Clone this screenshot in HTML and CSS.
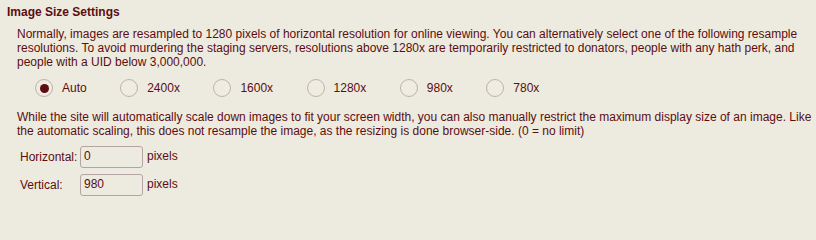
FILE: index.html
```html
<!DOCTYPE html>
<html lang="en">
<head>
<meta charset="utf-8">
<title>Image Size Settings</title>
<link rel="stylesheet" href="styles.css">
</head>
<body>
<div class="section">
  <h2 class="title">Image Size Settings</h2>
  <p class="desc">Normally, images are resampled to 1280 pixels of horizontal resolution for online viewing. You can alternatively select one of the following resample resolutions. To avoid murdering the staging servers, resolutions above 1280x are temporarily restricted to donators, people with any hath perk, and people with a UID below 3,000,000.</p>
  <div class="radios">
    <label class="opt"><span class="radio checked"></span><span class="opt-text">Auto</span></label>
    <label class="opt"><span class="radio"></span><span class="opt-text">2400x</span></label>
    <label class="opt"><span class="radio"></span><span class="opt-text">1600x</span></label>
    <label class="opt"><span class="radio"></span><span class="opt-text">1280x</span></label>
    <label class="opt"><span class="radio"></span><span class="opt-text">980x</span></label>
    <label class="opt"><span class="radio"></span><span class="opt-text">780x</span></label>
  </div>
  <p class="desc desc2">While the site will automatically scale down images to fit your screen width, you can also manually restrict the maximum display size of an image. Like the automatic scaling, this does not resample the image, as the resizing is done browser-side. (0 = no limit)</p>
  <div class="dims">
    <div class="dim-row">
      <span class="dim-label">Horizontal:</span>
      <input class="dim-input" type="text" value="0">
      <span class="unit">pixels</span>
    </div>
    <div class="dim-row">
      <span class="dim-label">Vertical:</span>
      <input class="dim-input" type="text" value="980">
      <span class="unit">pixels</span>
    </div>
  </div>
</div>
</body>
</html>
```
FILE: styles.css
```css
html, body {
  margin: 0;
  padding: 0;
  background: #EDEBDF;
}
body {
  font-family: "Liberation Sans", Arial, sans-serif;
  font-size: 12px;
  line-height: 14px;
  color: #5C0D11;
}
.section {
  padding: 5px 4px 0 7px;
}
.title {
  margin: 0;
  font-size: 12px;
  font-weight: bold;
  line-height: 14px;
}
.desc {
  margin: 8px 0 0 10px;
}
.radios {
  display: flex;
  align-items: center;
  gap: 33.5px;
  margin-top: 10px;
  padding-left: 28px;
  height: 18px;
}
.opt {
  display: flex;
  align-items: center;
  gap: 9px;
}
.radio {
  width: 18px;
  height: 18px;
  box-sizing: border-box;
  border: 1px solid #BDB2AD;
  border-radius: 50%;
  background: #EFECE0;
  display: flex;
  align-items: center;
  justify-content: center;
}
.radio.checked::after {
  content: "";
  width: 9px;
  height: 9px;
  border-radius: 50%;
  background: #5C0D11;
}
.desc2 {
  margin-top: 13px;
}
.dims {
  margin: 8px 0 0 13px;
  display: flex;
  flex-direction: column;
  gap: 6px;
}
.dim-row {
  display: flex;
  align-items: center;
  height: 22px;
}
.dim-label {
  width: 60px;
}
.dim-input {
  box-sizing: border-box;
  width: 63px;
  height: 22px;
  margin: 0;
  padding: 0 3px 2px;
  border: 1px solid #B5A4A4;
  border-radius: 3px;
  background: #EDEBDF;
  color: #5C0D11;
  font-family: "Liberation Sans", Arial, sans-serif;
  font-size: 12px;
  outline: none;
}
.unit {
  margin-left: 4px;
  align-self: flex-start;
  margin-top: 3px;
}
```
